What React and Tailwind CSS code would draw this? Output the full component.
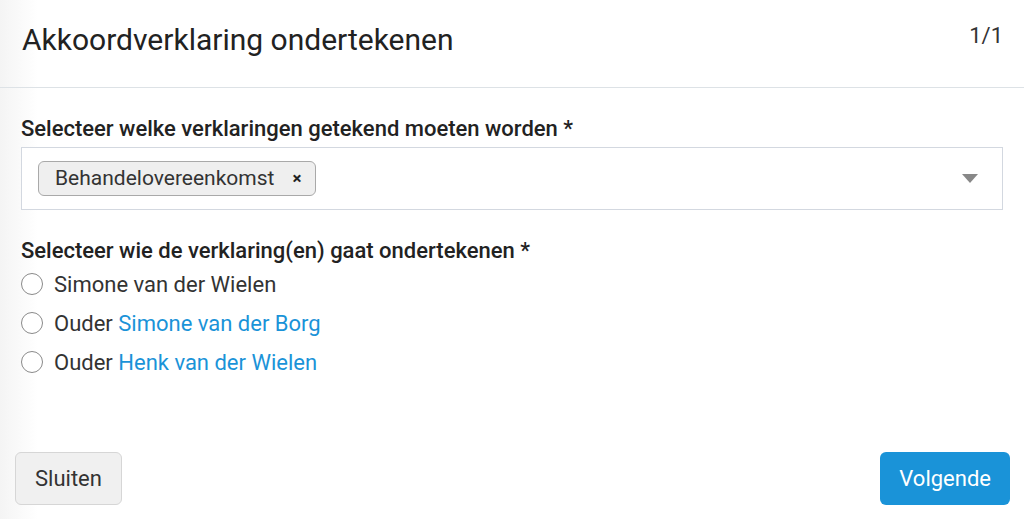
import React, { useState } from 'react';

const signers = [
  { id: 'self', prefix: null, name: 'Simone van der Wielen' },
  { id: 'p1', prefix: 'Ouder', name: 'Simone van der Borg' },
  { id: 'p2', prefix: 'Ouder', name: 'Henk van der Wielen' },
];

const SignAgreementModal = () => {
  const [selected, setSelected] = useState(null);
  const [agreements, setAgreements] = useState(['Behandelovereenkomst']);

  return (
    <div className="flex h-[519px] w-[1024px] flex-col bg-[linear-gradient(to_right,#f4f4f4,#ffffff_38px)] font-['Roboto',sans-serif] text-[#222]">
      {/* header */}
      <div className="flex h-[88px] shrink-0 items-start justify-between border-b border-[#dde2e6] pl-[22px] pr-[21px]">
        <h2 className="mt-[21px] text-[30px] leading-[38px] text-[#222]">Akkoordverklaring ondertekenen</h2>
        <span className="mt-[21px] text-[22px] leading-[30px] text-[#333]">1/1</span>
      </div>

      {/* body */}
      <div className="flex flex-1 flex-col px-[21px] pt-[26px]">
        <label className="text-[22px] font-medium leading-[30px] text-[#222]">
          Selecteer welke verklaringen getekend moeten worden *
        </label>
        <div className="mt-[3px] flex h-[63px] items-center border border-[#d3d8e0] bg-white pl-[16px] pr-[24px]">
          <div className="flex flex-1 gap-2">
            {agreements.map((a) => (
              <span
                key={a}
                className="flex h-[35px] items-center gap-[18px] rounded-[6px] border border-[#a9a9a9] bg-[#efefef] pl-[16px] pr-[14px] text-[21px] text-[#333]"
              >
                {a}
                <button
                  className="text-[17px] font-bold leading-none text-[#222]"
                  onClick={() => setAgreements(agreements.filter((x) => x !== a))}
                >
                  ×
                </button>
              </span>
            ))}
          </div>
          <svg width="16" height="9" viewBox="0 0 16 9">
            <path d="M0 0h16L8 9z" fill="#888" />
          </svg>
        </div>

        <label className="mt-[26px] text-[22px] font-medium leading-[30px] text-[#222]">
          Selecteer wie de verklaring(en) gaat ondertekenen *
        </label>
        <div className="mt-[3px] flex flex-col gap-[9px]">
          {signers.map((s) => (
            <label key={s.id} className="flex h-[30px] cursor-pointer items-center gap-[11px] text-[22px]">
              <span
                className="flex h-[22px] w-[22px] items-center justify-center rounded-full border-[1.5px] border-[#8a8a8a] bg-white"
                onClick={() => setSelected(s.id)}
              >
                {selected === s.id && <span className="h-[11px] w-[11px] rounded-full bg-[#1a93d8]" />}
              </span>
              <span>
                {s.prefix ? (
                  <>
                    <span className="text-[#333]">{s.prefix} </span>
                    <a className="text-[#1a93d8]">{s.name}</a>
                  </>
                ) : (
                  <span className="text-[#333]">{s.name}</span>
                )}
              </span>
            </label>
          ))}
        </div>
      </div>

      {/* footer */}
      <div className="flex shrink-0 items-center justify-between pl-[15px] pr-[14px] pb-[14px]">
        <button className="h-[53px] rounded-[6px] border border-[#d6d6d6] bg-[#f0f0f0] px-[19px] text-[22px] text-[#333]">
          Sluiten
        </button>
        <button className="h-[53px] rounded-[6px] bg-[#1a93d8] px-[19px] text-[22px] text-white">Volgende</button>
      </div>
    </div>
  );
};

export default function App() {
  return <SignAgreementModal />;
}
